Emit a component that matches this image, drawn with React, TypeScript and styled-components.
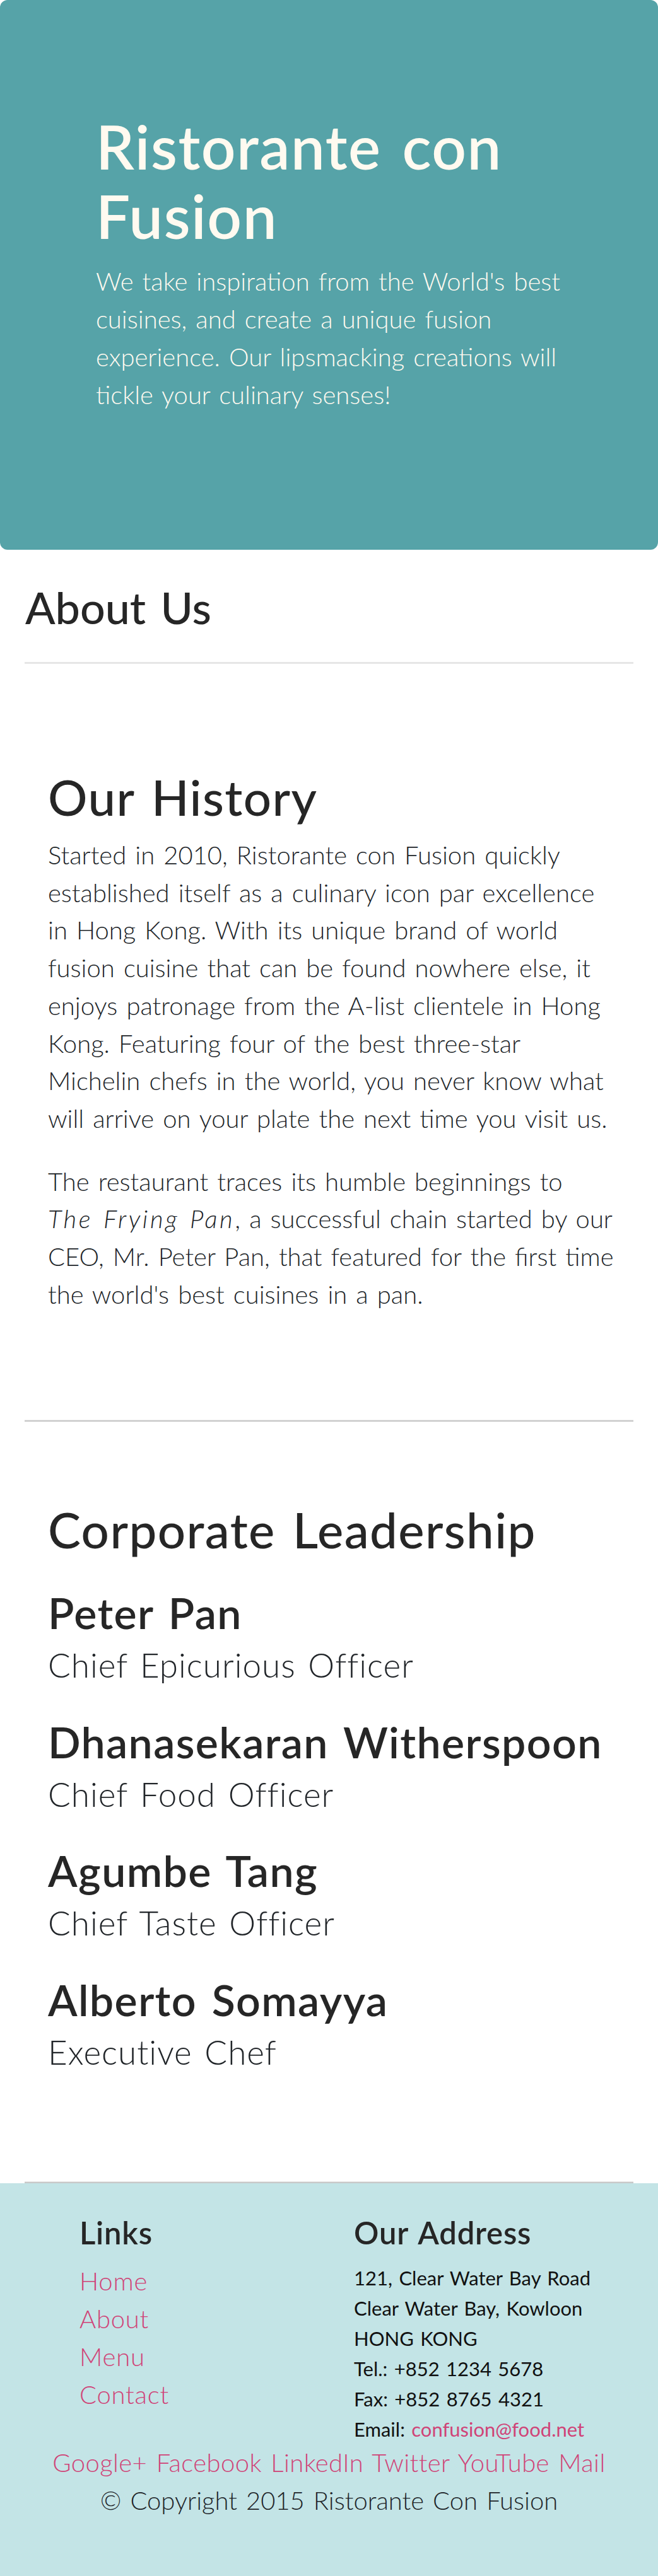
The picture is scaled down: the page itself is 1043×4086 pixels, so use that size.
import React from "react";
import styled, { createGlobalStyle } from "styled-components";

const GlobalStyle = createGlobalStyle`
  *, *::before, *::after { box-sizing: border-box; }
  html, body { margin: 0; padding: 0; background: #ffffff; }
  body {
    font-family: Lato, "Open Sans", "Liberation Sans", sans-serif;
    color: #212529;
    -webkit-font-smoothing: antialiased;
  }
  body * { word-spacing: 0.08em; }
  a { text-decoration: none; }
`;

const Page = styled.div`
  width: 1043px;
  display: flex;
  flex-direction: column;
`;

const Jumbotron = styled.header`
  background: #56a3a8;
  color: #fffaf0;
  border-radius: 12px;
  padding: 177px 152px 216px;
`;

const HeroTitle = styled.h1`
  margin: 0 0 19px;
  font-size: 96px;
  line-height: 110px;
  font-weight: 600;
  letter-spacing: 1.5px;
`;

const HeroText = styled.p`
  margin: 0;
  font-size: 40px;
  line-height: 60px;
  font-weight: 300;
`;

const Main = styled.main`
  padding: 0 39px;
  display: flex;
  flex-direction: column;
`;

const PageTitle = styled.h3`
  margin: 49px 0 45px 1px;
  font-size: 70px;
  line-height: 84px;
  font-weight: 500;
  color: #262626;
`;

const Rule = styled.hr<{ $tone?: "light" | "dark" }>`
  margin: 0;
  border: 0;
  height: 3px;
  background: ${(p) =>
    p.$tone === "dark"
      ? "linear-gradient(#e8e8e8 0 1px, #c8c8c8 1px 3px)"
      : "#e6e6e6"};
`;

const Section = styled.section<{ $top: number; $bottom: number }>`
  padding: ${(p) => p.$top}px 29px ${(p) => p.$bottom}px 37px;
`;

const SectionTitle = styled.h2<{ $gap: number }>`
  margin: 0 0 ${(p) => p.$gap}px;
  font-size: 78px;
  line-height: 94px;
  font-weight: 500;
  letter-spacing: 1.4px;
  color: #262626;
`;

const BodyText = styled.p`
  margin: 0 0 40px;
  font-size: 40px;
  line-height: 59.7px;
  font-weight: 300;
`;

const WorkTitle = styled.em`
  font-style: italic;
  letter-spacing: 3.6px;
`;

const Leader = styled.div`
  display: flex;
  flex-direction: column;
  gap: 10px;
  margin-bottom: 48.5px;
`;

const LeaderName = styled.h3`
  margin: 0;
  font-size: 68px;
  line-height: 82px;
  font-weight: 600;
  letter-spacing: 1.4px;
  color: #262626;
`;

const LeaderRole = styled.p`
  margin: 0;
  font-size: 53px;
  line-height: 64px;
  font-weight: 300;
  letter-spacing: 1px;
`;

const Footer = styled.footer`
  background: #c3e4e6;
  padding: 48.5px 0 92px;
  display: flex;
  flex-direction: column;
`;

const FooterColumns = styled.div`
  display: grid;
  grid-template-columns: 435px 1fr;
  padding-left: 126px;
`;

const FooterHeading = styled.h5`
  margin: 0 0 18.5px;
  font-size: 49px;
  line-height: 59px;
  font-weight: 600;
  letter-spacing: 0.8px;
  color: #262626;
`;

const LinkList = styled.ul`
  list-style: none;
  margin: 0;
  padding: 0;
`;

const LinkItem = styled.li`
  font-size: 40px;
  line-height: 59.7px;
  font-weight: 300;
  letter-spacing: 0.8px;
`;

const PinkLink = styled.a`
  color: #d04377;
`;

const Address = styled.address`
  margin: 0;
  font-style: normal;
  font-size: 31px;
  line-height: 48px;
  font-weight: 400;
  color: #111111;
`;

const SocialRow = styled.div`
  text-align: center;
  font-size: 40px;
  line-height: 59.7px;
  font-weight: 300;
  letter-spacing: 0.4px;
`;

const Copyright = styled.p`
  margin: 0;
  text-align: center;
  font-size: 40px;
  line-height: 59.7px;
  font-weight: 300;
`;

const leaders = [
  { name: "Peter Pan", role: "Chief Epicurious Officer" },
  { name: "Dhanasekaran Witherspoon", role: "Chief Food Officer" },
  { name: "Agumbe Tang", role: "Chief Taste Officer" },
  { name: "Alberto Somayya", role: "Executive Chef" },
];

const socials = ["Google+", "Facebook", "LinkedIn", "Twitter", "YouTube", "Mail"];

export default function App() {
  return (
    <Page>
      <GlobalStyle />
      <Jumbotron>
        <HeroTitle>Ristorante con Fusion</HeroTitle>
        <HeroText>
          We take inspiration from the World's best cuisines, and create a unique
          fusion experience. Our lipsmacking creations will tickle your culinary
          senses!
        </HeroText>
      </Jumbotron>

      <Main>
        <PageTitle>About Us</PageTitle>
        <Rule />
        <Section $top={164} $bottom={129}>
          <SectionTitle $gap={16}>Our History</SectionTitle>
          <BodyText>
            Started in 2010, Ristorante con Fusion quickly established itself as a
            culinary icon par excellence in Hong Kong. With its unique brand of
            world fusion cuisine that can be found nowhere else, it enjoys
            patronage from the A-list clientele in Hong Kong. Featuring four of the
            best three-star Michelin chefs in the world, you never know what will
            arrive on your plate the next time you visit us.
          </BodyText>
          <BodyText>
            The restaurant traces its humble beginnings to{" "}
            <WorkTitle>The Frying Pan</WorkTitle>, a successful chain started by
            our CEO, Mr. Peter Pan, that featured for the first time the world's
            best cuisines in a pan.
          </BodyText>
        </Section>
        <Rule $tone="dark" />
        <Section $top={124} $bottom={125}>
          <SectionTitle $gap={44}>Corporate Leadership</SectionTitle>
          {leaders.map((l) => (
            <Leader key={l.name}>
              <LeaderName>{l.name}</LeaderName>
              <LeaderRole>{l.role}</LeaderRole>
            </Leader>
          ))}
        </Section>
        <Rule $tone="dark" />
      </Main>

      <Footer>
        <FooterColumns>
          <div>
            <FooterHeading>Links</FooterHeading>
            <LinkList>
              {["Home", "About", "Menu", "Contact"].map((t) => (
                <LinkItem key={t}>
                  <PinkLink href="#">{t}</PinkLink>
                </LinkItem>
              ))}
            </LinkList>
          </div>
          <div>
            <FooterHeading>Our Address</FooterHeading>
            <Address>
              121, Clear Water Bay Road
              <br />
              Clear Water Bay, Kowloon
              <br />
              HONG KONG
              <br />
              Tel.: +852 1234 5678
              <br />
              Fax: +852 8765 4321
              <br />
              Email: <PinkLink href="#">confusion@food.net</PinkLink>
            </Address>
          </div>
        </FooterColumns>
        <SocialRow>
          {socials.map((s, i) => (
            <React.Fragment key={s}>
              {i > 0 ? " " : null}
              <PinkLink href="#">{s}</PinkLink>
            </React.Fragment>
          ))}
        </SocialRow>
        <Copyright>© Copyright 2015 Ristorante Con Fusion</Copyright>
      </Footer>
    </Page>
  );
}
